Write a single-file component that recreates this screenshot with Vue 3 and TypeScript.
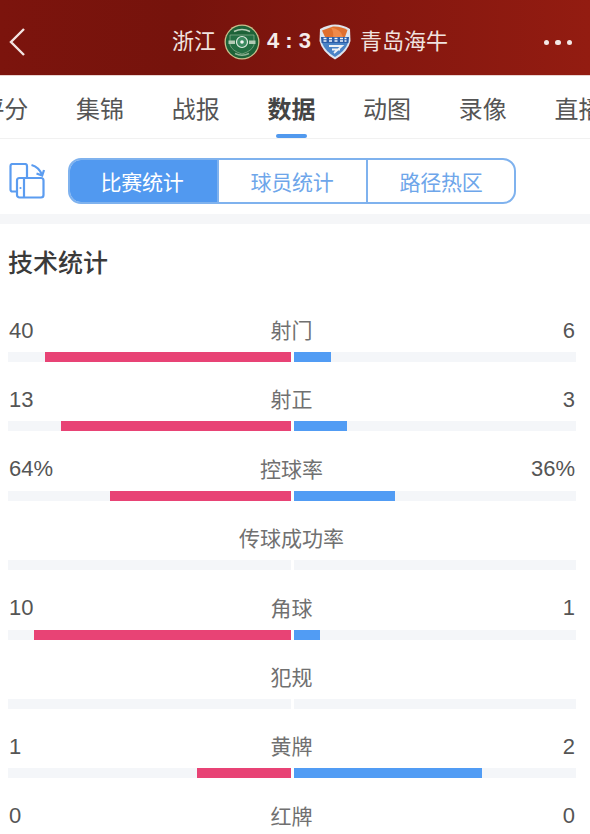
<script setup lang="ts">
interface Stat { label: string; home: string; away: string; left: number; right: number }
const tabs: string[] = ['评分', '集锦', '战报', '数据', '动图', '录像', '直播']
const segments: string[] = ['比赛统计', '球员统计', '路径热区']
const stats: Stat[] = [
  { label: '射门', home: '40', away: '6', left: 245.5, right: 37 },
  { label: '射正', home: '13', away: '3', left: 229.5, right: 53 },
  { label: '控球率', home: '64%', away: '36%', left: 181, right: 101 },
  { label: '传球成功率', home: '', away: '', left: 0, right: 0 },
  { label: '角球', home: '10', away: '1', left: 256.5, right: 26 },
  { label: '犯规', home: '', away: '', left: 0, right: 0 },
  { label: '黄牌', home: '1', away: '2', left: 94, right: 188 },
  { label: '红牌', home: '0', away: '0', left: 0, right: 0 },
]
</script>

<template>
  <div class="page">
    <header class="top">
      <svg class="back" width="18" height="30" viewBox="0 0 18 30">
        <path d="M16 2 L3 15 L16 28" fill="none" stroke="#f3e4e2" stroke-width="2.4" />
      </svg>
      <div class="match">
        <span class="team">浙江</span>
        <svg class="crest" width="36" height="36" viewBox="0 0 36 36">
          <circle cx="18" cy="18" r="17.5" fill="#c9c08e" />
          <circle cx="18" cy="18" r="16.2" fill="#1d6338" />
          <path d="M6 11 H30 V21 Q28 27 18 30 Q8 27 6 21 Z" fill="#246f43" stroke="#8fb293" stroke-width="0.7" />
          <circle cx="18" cy="18" r="5.5" fill="#3b8a60" stroke="#e0ebe0" stroke-width="1.2" />
          <circle cx="18" cy="18" r="1.8" fill="#f2f6f2" />
          <rect x="4.5" y="16.5" width="6.5" height="3.5" fill="#b3cbb5" />
          <rect x="25" y="16.5" width="6.5" height="3.5" fill="#b3cbb5" />
          <path d="M10 7.5 Q18 3.5 26 7.5" fill="none" stroke="#b9cdb6" stroke-width="1.6" />
          <path d="M11 29.5 Q18 33 25 29.5" fill="none" stroke="#8fb293" stroke-width="1.4" />
        </svg>
        <span class="score">4 : 3</span>
        <svg class="crest shield" width="32" height="36" viewBox="0 0 32 36">
          <path d="M1 5 Q9 0.5 16 0.5 Q24 0.5 31 5 L31.5 17 Q29 28 16 35.5 Q3 28 0.5 17 Z" fill="#dfe5ee" />
          <path d="M3 6.5 L6 13 L26 13 L28.5 6 Q22 2 14 2.5 Z" fill="#e0702f" />
          <path d="M12 3.5 Q22 5 24 13 L14 13 Q15 8 12 3.5 Z" fill="#f08a4a" />
          <path d="M2 13 H30 L29.5 19 H2.5 Z" fill="#2c5ea8" />
          <path d="M4.5 14.5 h3 M10 14.5 h3 M15.5 14.5 h3 M21 14.5 h3 M25.5 14.5 h2 M4.5 17 h3 M10 17 h3 M15.5 17 h3 M21 17 h3 M25.5 17 h2" stroke="#eef3fa" stroke-width="1.5" />
          <path d="M3 19 H29 Q26 27 16 33 Q6 27 3 19 Z" fill="#4a83c6" />
          <path d="M10 22 H23 L15 29 M13 25.5 H21" fill="none" stroke="#eef2f6" stroke-width="1.8" />
        </svg>
        <span class="team">青岛海牛</span>
      </div>
      <div class="more"><i></i><i></i><i></i></div>
    </header>

    <nav class="tabs">
      <div v-for="t in tabs" :key="t" class="tab" :class="{ on: t === '数据' }">{{ t }}</div>
    </nav>

    <section class="switch">
      <svg class="rotate" width="36" height="36" viewBox="0 0 36 36" fill="none" stroke="#5b9cf0" stroke-width="2.2">
        <path d="M8 28.5 H3.5 Q1.5 28.5 1.5 26.5 V3 Q1.5 1 3.5 1 H16 Q18 1 18 3 V15" />
        <rect x="8" y="15" width="26.5" height="19.5" rx="2.5" />
        <path d="M15 15 V34.5" />
        <circle cx="11.5" cy="25" r="1.1" fill="#5b9cf0" stroke="none" />
        <path d="M22.5 2 Q30 4 33 12" />
        <path d="M27.5 10.5 L33.2 12.5 L35 7" />
      </svg>
      <div class="seg">
        <div v-for="(s, i) in segments" :key="s" class="seg-item" :class="{ active: i === 0 }">{{ s }}</div>
      </div>
    </section>

    <div class="band"></div>

    <section class="stats">
      <h2 class="title">技术统计</h2>
      <div v-for="s in stats" :key="s.label" class="row">
        <div class="line">
          <span class="num">{{ s.home }}</span>
          <span class="label">{{ s.label }}</span>
          <span class="num">{{ s.away }}</span>
        </div>
        <div class="bars">
          <div class="track left"><div class="fill pink" :style="{ width: s.left + 'px' }"></div></div>
          <div class="track right"><div class="fill blue" :style="{ width: s.right + 'px' }"></div></div>
        </div>
      </div>
    </section>
  </div>
</template>

<style scoped>
.page {
  width: 590px;
  height: 834px;
  overflow: hidden;
  background: #fff;
  font-family: "Noto Sans CJK SC", "Liberation Sans", sans-serif;
}
.top {
  height: 76px;
  display: flex;
  align-items: center;
  justify-content: space-between;
  padding: 8px 18px 0 8px;
  box-sizing: border-box;
  background: linear-gradient(90deg, #7c140d 0%, #76130c 30%, #85170f 65%, #931c11 100%);
  border-bottom: 1px solid #e9d3d0;
}
.match {
  display: flex;
  align-items: center;
  color: #f0e2df;
  margin-left: 146px;
}
.team {
  font-size: 22px;
  line-height: 30px;
  margin-bottom: 5px;
}
.crest { display: block; margin-left: 8px; }
.shield { margin-left: 0; }
.score {
  font-family: "Liberation Sans", sans-serif;
  font-size: 22px;
  font-weight: 700;
  color: #f6ecea;
  margin: 0 8px 2px 7px;
  white-space: pre;
}
.shield + .team { margin-left: 9px; }
.more { display: flex; gap: 6px; margin-left: auto; margin-top: 2px; }
.more i {
  display: block;
  width: 5.5px;
  height: 5.5px;
  border-radius: 50%;
  background: #f3e8e6;
}
.tabs {
  height: 63px;
  margin-left: -43.5px;
  display: flex;
  border-bottom: 1px solid #f1f1f1;
  box-sizing: border-box;
}
.tab {
  position: relative;
  flex: 0 0 95.7px;
  text-align: center;
  font-size: 24px;
  line-height: 63px;
  color: #555;
  white-space: nowrap;
}
.tab.on {
  font-weight: 700;
  color: #444;
}
.tab.on::after {
  content: "";
  position: absolute;
  left: 32px;
  bottom: 0;
  width: 31px;
  height: 4px;
  border-radius: 2px;
  background: #5199ee;
}
.switch {
  height: 75px;
  display: flex;
  align-items: center;
  padding-left: 9px;
  padding-top: 9px;
  box-sizing: border-box;
}
.rotate { display: block; margin-right: 23px; }
.seg {
  width: 448px;
  height: 46px;
  display: flex;
  box-sizing: border-box;
  border: 2px solid #7fb2ee;
  border-radius: 13px;
  overflow: hidden;
}
.seg-item {
  flex: 1;
  display: flex;
  align-items: center;
  justify-content: center;
  font-size: 21px;
  letter-spacing: -0.2px;
  color: #6ea6ea;
  border-left: 2px solid #7fb2ee;
}
.seg-item:first-child { border-left: none; flex: 0 0 147px; padding-right: 3px; box-sizing: border-box; }
.seg-item:nth-child(2) { padding-right: 1px; }
.seg-item.active {
  background: #5199f0;
  color: #fff;
}
.band {
  height: 10px;
  background: #f5f6f8;
}
.stats {
  padding: 0 14px 0 8px;
}
.title {
  margin: 0;
  height: 76px;
  padding-top: 17px;
  box-sizing: border-box;
  font-size: 25px;
  line-height: 40px;
  font-weight: 500;
  color: #3a3a3a;
}
.row { height: 69.4px; padding-top: 14px; box-sizing: border-box; }
.line {
  position: relative;
  height: 30px;
  display: flex;
  justify-content: space-between;
  align-items: center;
  padding: 0 1px;
}
.num {
  font-family: "Liberation Sans", sans-serif;
  font-size: 22px;
  color: #555;
  padding-top: 3px;
}
.label {
  position: absolute;
  left: -1px;
  right: 0;
  text-align: center;
  font-size: 21px;
  color: #707070;
  pointer-events: none;
}
.bars {
  margin-top: 8px;
  display: flex;
  gap: 3px;
}
.track {
  flex: 1;
  height: 10px;
  display: flex;
  background: #f4f6f9;
}
.track.left { justify-content: flex-end; }
.fill { height: 100%; }
.pink { background: #e84375; }
.blue { background: #519cf4; }
</style>
